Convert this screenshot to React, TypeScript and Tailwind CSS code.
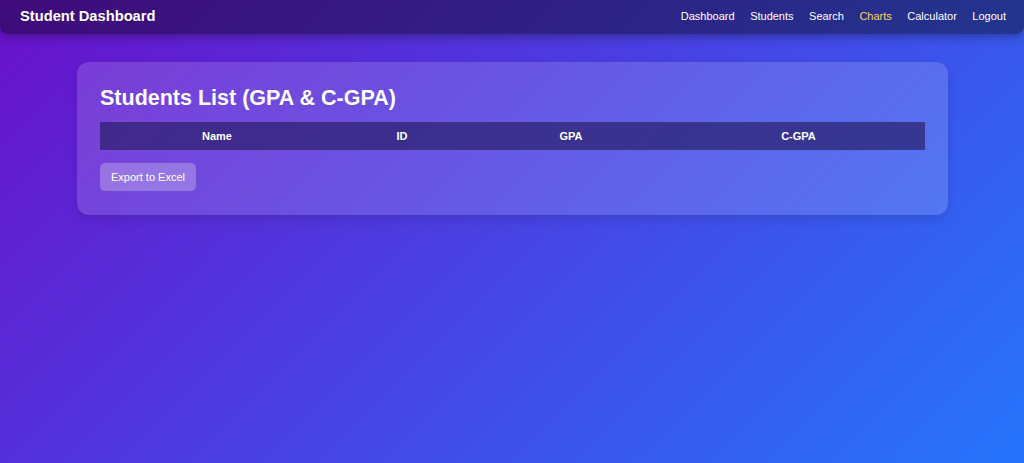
import React from "react";

const links = ["Dashboard", "Students", "Search", "Charts", "Calculator", "Logout"];

const Navbar = () => (
  <nav className="flex h-[34px] items-center justify-between rounded-b-lg bg-black/40 pb-[2px] pl-5 pr-[18px] shadow-[0_4px_10px_rgba(0,0,0,0.25)]">
    <h1 className="text-[14.7px] font-bold text-white">Student Dashboard</h1>
    <ul className="flex gap-[15.5px] text-[11px] text-white">
      {links.map((l) => (
        <li key={l} className={l === "Charts" ? "text-[#ffd166]" : ""}>
          {l}
        </li>
      ))}
    </ul>
  </nav>
);

export default function App() {
  return (
    <div
      className="min-h-[463px] bg-[linear-gradient(135deg,#6a11cb_0%,#2575fc_100%)] text-white"
      style={{ fontFamily: '"Liberation Sans", Arial, sans-serif' }}
    >
      <Navbar />
      <div className="ml-[77px] mr-[76px] pt-[28px]">
        <div className="rounded-xl bg-white/15 px-[23px] pb-[24px] pt-[24px] shadow-[0_4px_12px_rgba(0,0,0,0.12)]">
          <h2 className="text-[21.5px] font-bold leading-[24px]">Students List (GPA &amp; C-GPA)</h2>
          <div className="mt-[12px] grid h-[28px] grid-cols-[234px_136px_202px_1fr] items-center bg-[#2a1f6a]/70 text-center text-[11px] font-bold">
            <span>Name</span>
            <span>ID</span>
            <span>GPA</span>
            <span>C-GPA</span>
          </div>
          <button className="mt-[13px] h-[28px] w-[96px] rounded-[5px] bg-white/25 text-[11px] text-white">
            Export to Excel
          </button>
        </div>
      </div>
    </div>
  );
}
